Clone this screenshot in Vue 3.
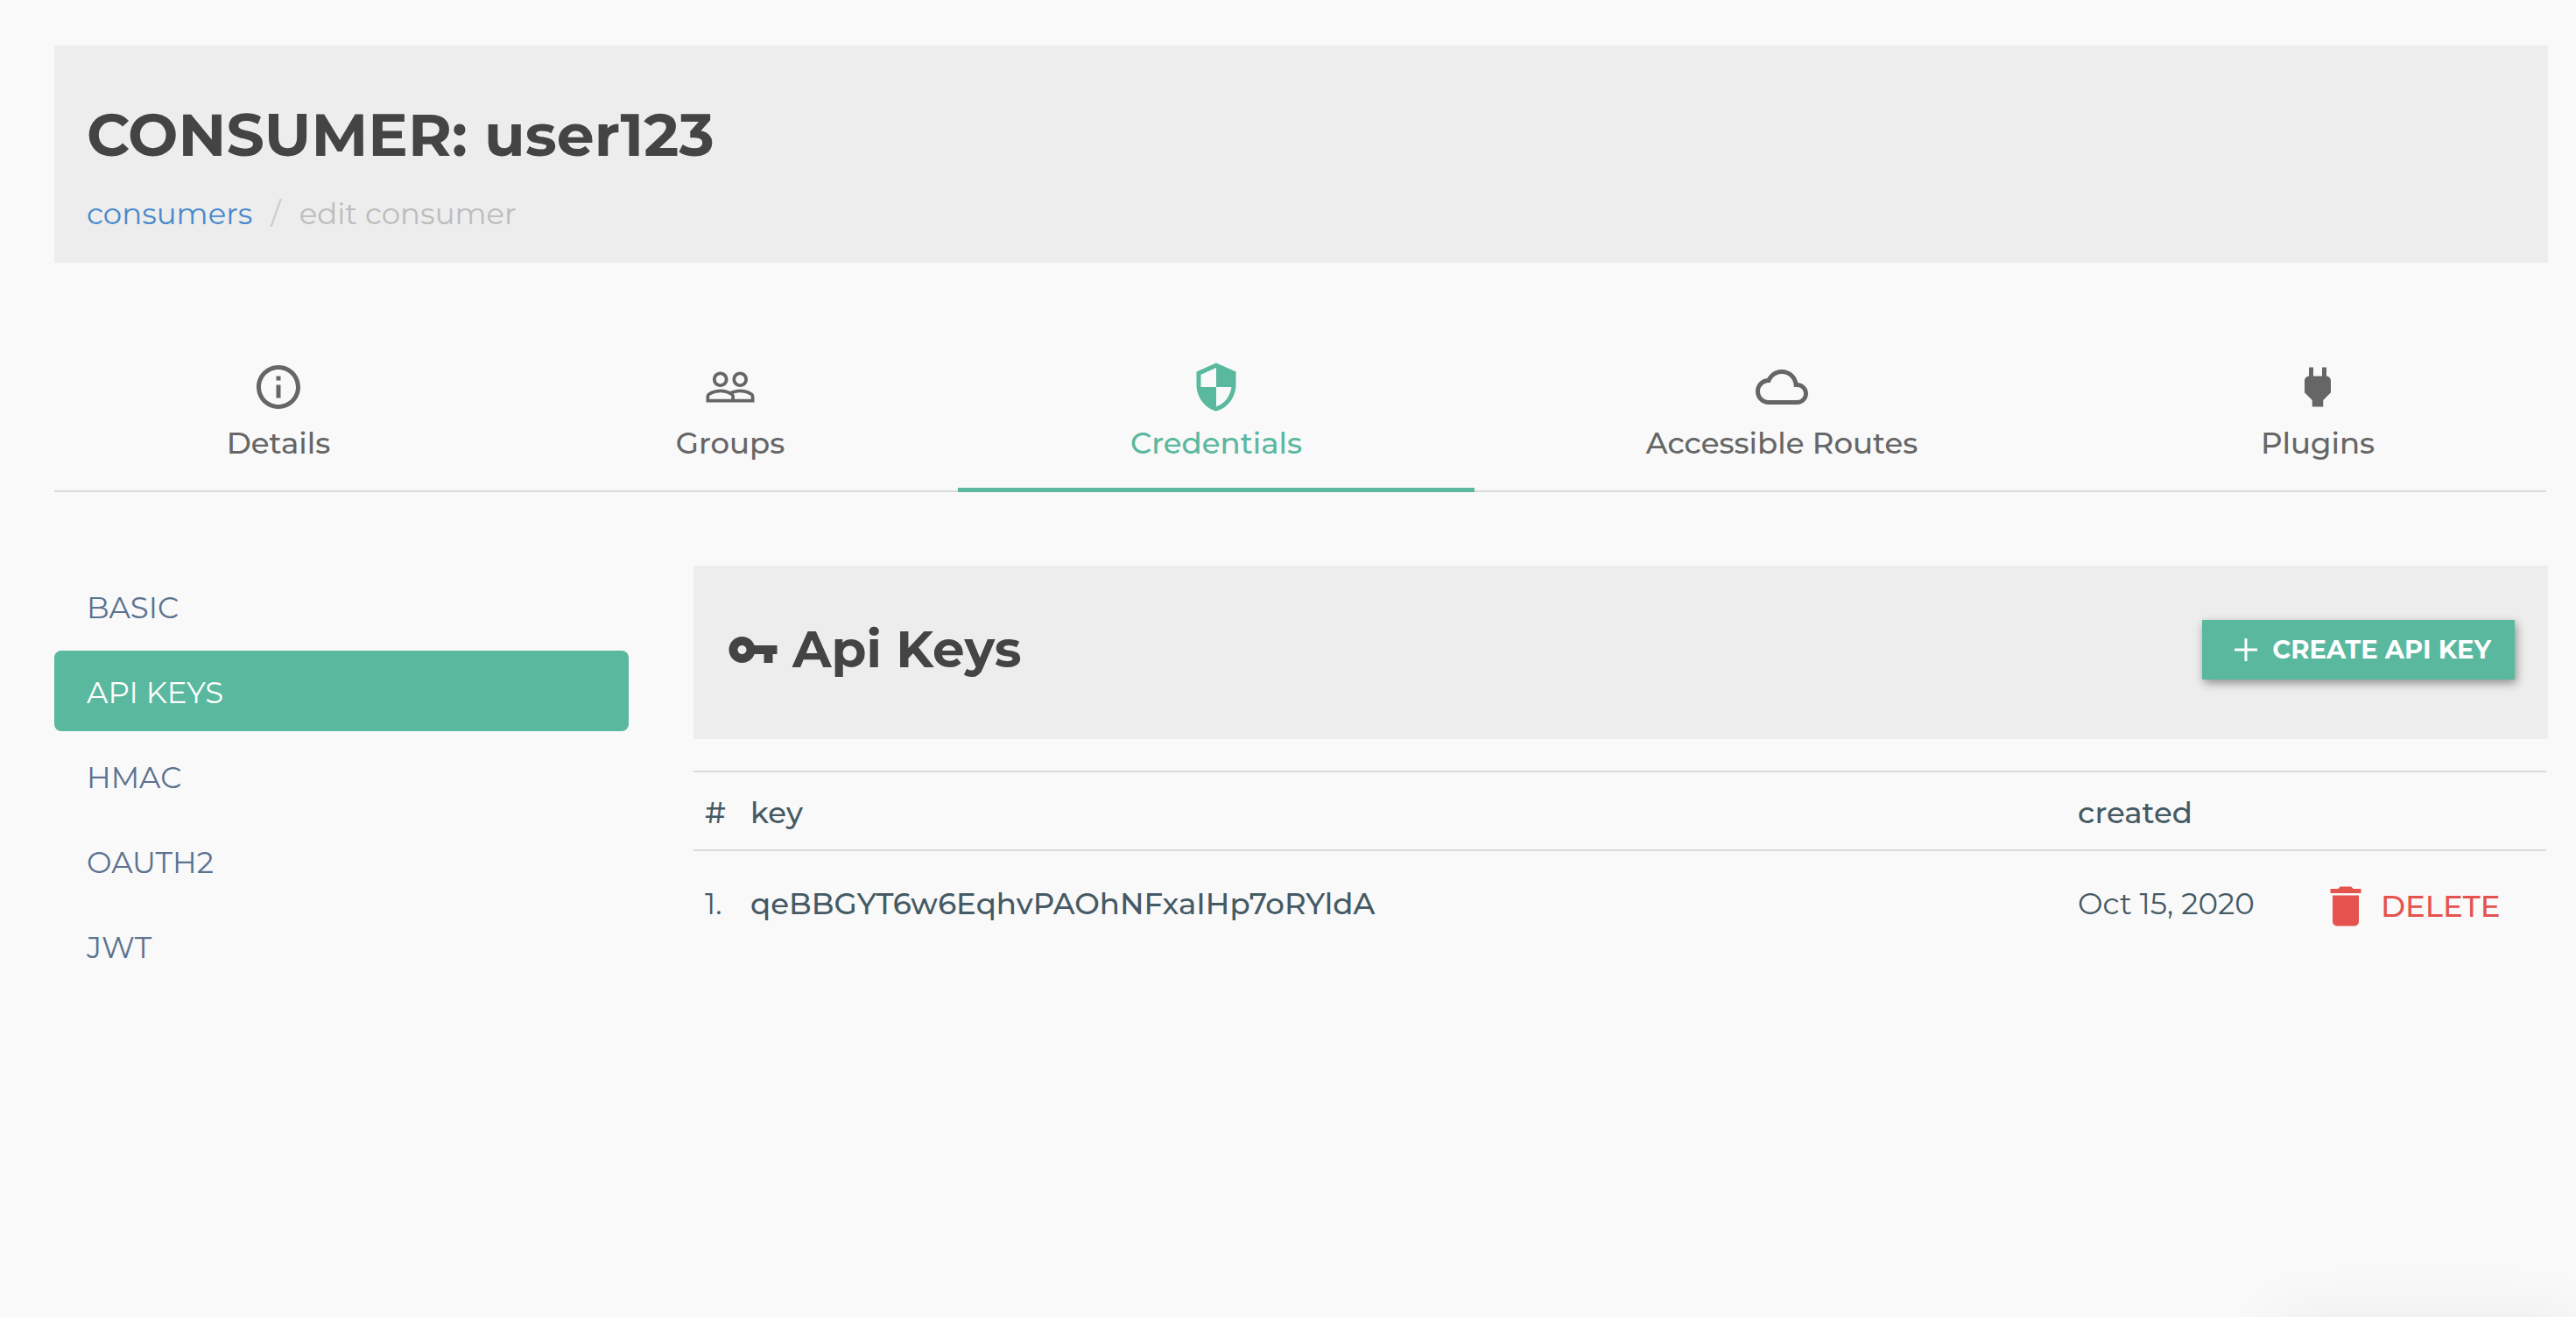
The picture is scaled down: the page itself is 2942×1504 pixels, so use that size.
<script setup>
import { ref } from 'vue'

const tabs = [
  {
    label: 'Details',
    icon: 'M11 17h2v-6h-2v6zm1-15C6.48 2 2 6.48 2 12s4.48 10 10 10 10-4.48 10-10S17.52 2 12 2zm0 18c-4.41 0-8-3.59-8-8s3.59-8 8-8 8 3.59 8 8-3.59 8-8 8zM11 9h2V7h-2v2z',
  },
  {
    label: 'Groups',
    icon: 'M16.5 13c-1.2 0-3.07.34-4.5 1-1.43-.67-3.3-1-4.5-1C5.33 13 1 14.08 1 16.25V19h22v-2.75c0-2.17-4.33-3.25-6.5-3.25zm-4 4.5h-10v-1.25c0-.54 2.56-1.75 5-1.75s5 1.21 5 1.75v1.25zm9 0H14v-1.25c0-.46-.2-.86-.52-1.22.88-.3 1.96-.53 3.02-.53 2.44 0 5 1.21 5 1.75v1.25zM7.5 12c1.93 0 3.5-1.57 3.5-3.5S9.43 5 7.5 5 4 6.57 4 8.5 5.57 12 7.5 12zm0-5.5c1.1 0 2 .9 2 2s-.9 2-2 2-2-.9-2-2 .9-2 2-2zm9 5.5c1.93 0 3.5-1.57 3.5-3.5S18.43 5 16.5 5 13 6.57 13 8.5s1.57 3.5 3.5 3.5zm0-5.5c1.1 0 2 .9 2 2s-.9 2-2 2-2-.9-2-2 .9-2 2-2z',
  },
  {
    label: 'Credentials',
    icon: 'M12 1L3 5v6c0 5.55 3.84 10.74 9 12 5.16-1.26 9-6.45 9-12V5l-9-4zm0 10.99h7c-.53 4.12-3.28 7.79-7 8.94V12H5V6.3l7-3.11v8.8z',
  },
  {
    label: 'Accessible Routes',
    icon: 'M19.35 10.04C18.67 6.59 15.64 4 12 4 9.11 4 6.6 5.64 5.35 8.04 2.34 8.36 0 10.91 0 14c0 3.31 2.69 6 6 6h13c2.76 0 5-2.24 5-5 0-2.64-2.05-4.78-4.65-4.96zM19 18H6c-2.21 0-4-1.79-4-4s1.79-4 4-4h.71C7.37 7.69 9.48 6 12 6c3.04 0 5.5 2.46 5.5 5.5v.5H19c1.66 0 3 1.34 3 3s-1.34 3-3 3z',
  },
  {
    label: 'Plugins',
    icon: 'M16 7V3h-2v4h-4V3H8v4C7 7 6 8 6 9v5.5L9.5 18v3h5v-3l3.500-3.500V9c0-1-1-2-2-2z',
  },
]

const sections = ['BASIC', 'API KEYS', 'HMAC', 'OAUTH2', 'JWT']
const keys = [{ key: 'qeBBGYT6w6EqhvPAOhNFxaIHp7oRYldA', created: 'Oct 15, 2020' }]

const activeTab = ref('Credentials')
const activeSection = ref('API KEYS')
</script>

<template>
  <main class="page">
    <header class="page-header">
      <h1>CONSUMER: user123</h1>
      <nav class="breadcrumb" aria-label="Breadcrumb">
        <a href="#consumers">consumers</a>
        <span class="separator">/</span>
        <span class="current">edit consumer</span>
      </nav>
    </header>

    <nav class="tabs" aria-label="Consumer">
      <button
        v-for="tab in tabs"
        :key="tab.label"
        type="button"
        class="tab"
        :class="{ active: tab.label === activeTab }"
        @click="activeTab = tab.label"
      >
        <svg class="icon" viewBox="0 0 24 24" aria-hidden="true"><path :d="tab.icon" /></svg>
        <span>{{ tab.label }}</span>
      </button>
    </nav>

    <div class="content">
      <nav class="sections" aria-label="Credential types">
        <a
          v-for="section in sections"
          :key="section"
          href="#credentials"
          class="section"
          :class="{ active: section === activeSection }"
          @click.prevent="activeSection = section"
        >{{ section }}</a>
      </nav>

      <section class="panel">
        <div class="panel-header">
          <h2>
            <svg class="icon" viewBox="0 0 24 24" aria-hidden="true">
              <path d="M12.650 10C11.830 7.670 9.610 6 7 6c-3.310 0-6 2.690-6 6s2.690 6 6 6c2.610 0 4.830-1.670 5.650-4H17v4h4v-4h2v-4H12.650zM7 14c-1.100 0-2-.9-2-2s.9-2 2-2 2 .9 2 2-.9 2-2 2z" />
            </svg>
            Api Keys
          </h2>
          <button type="button" class="create">
            <svg viewBox="0 0 28 28" aria-hidden="true"><path d="M14 1v26M1 14h26" /></svg>
            CREATE API KEY
          </button>
        </div>

        <table>
          <colgroup>
            <col class="col-index" />
            <col />
            <col class="col-side" />
            <col class="col-side" />
          </colgroup>
          <thead>
            <tr>
              <th scope="col">#</th>
              <th scope="col">key</th>
              <th scope="col">created</th>
              <th></th>
            </tr>
          </thead>
          <tbody>
            <tr v-for="(row, index) in keys" :key="row.key">
              <td>{{ index + 1 }}.</td>
              <td class="key">{{ row.key }}</td>
              <td>{{ row.created }}</td>
              <td class="actions">
                <button type="button" class="delete">
                  <svg class="icon" viewBox="0 0 24 24" aria-hidden="true">
                    <path d="M19 4h-3.500l-1-1h-5l-1 1H5v2h14zM6 19a2 2 0 0 0 2 2h8a2 2 0 0 0 2-2V7H6z" />
                  </svg>
                  DELETE
                </button>
              </td>
            </tr>
          </tbody>
        </table>
      </section>
    </div>

    <div class="toast" role="status"></div>
  </main>
</template>

<style>
body {
  background: #f9f9f9;
}
</style>

<style scoped>
.page {
  padding: 52px 32px 52px 62px;
  font-family: Montserrat, Inter, sans-serif;
  font-size: 34px;
  line-height: 50px;
  color: #455a64;
}

button {
  margin: 0;
  padding: 0;
  border: 0;
  background: none;
  font: inherit;
  color: inherit;
  cursor: pointer;
}

a {
  text-decoration: none;
}

.icon {
  flex: none;
  width: 60px;
  height: 60px;
  fill: currentColor;
}

.page-header {
  padding: 62px 37px 31px;
  background: #ededed;
}

h1 {
  margin: 0 0 25px;
  font-size: 68px;
  font-weight: 700;
  line-height: 80px;
  color: #444;
}

.breadcrumb {
  display: flex;
  gap: 21px;
}

.breadcrumb a {
  color: #4a8acb;
}

.separator {
  color: #ccc;
}

.current {
  color: #bcbcbc;
}

.tabs {
  display: grid;
  grid-template-columns: 512fr 520fr 590fr 702fr 522fr;
  margin: 60px 2px 84px 0;
  box-shadow: inset 0 -2px #dadada;
}

.tab {
  display: flex;
  flex-direction: column;
  align-items: center;
  gap: 9px;
  padding: 52px 0 26px;
  border-bottom: 5px solid transparent;
  font-weight: 500;
  color: #666;
}

.tab.active {
  border-color: #59b89e;
  color: #59b89e;
}

.content {
  display: grid;
  grid-template-columns: 656fr 2118fr;
  gap: 74px;
  align-items: start;
}

.sections {
  display: flex;
  flex-direction: column;
  gap: 5px;
}

.section {
  padding: 23px 37px 19px;
  border-radius: 8px;
  color: #5b7290;
}

.section.active {
  background: #59b89e;
  color: #fff;
}

.panel-header {
  display: flex;
  align-items: center;
  justify-content: space-between;
  padding: 61px 38px 67px;
  background: #ededed;
}

h2 {
  display: flex;
  align-items: center;
  gap: 15px;
  margin: 0;
  font-size: 58px;
  font-weight: 700;
  line-height: 70px;
  color: #444;
}

.create {
  display: flex;
  align-items: center;
  gap: 16px;
  padding: 9px 27px 9px 36px;
  background: #59b89e;
  box-shadow: 2px 4px 10px rgba(0, 0, 0, 0.4);
  font-size: 29px;
  font-weight: 700;
  color: #fff;
}

.create svg {
  width: 28px;
  height: 28px;
  fill: none;
  stroke: currentColor;
  stroke-width: 3;
}

table {
  width: calc(100% - 2px);
  margin-top: 36px;
  border-collapse: collapse;
  border-top: 2px solid #dadada;
  table-layout: fixed;
}

.col-index {
  width: 52px;
}

.col-side {
  width: 274px;
}

th,
td {
  padding: 21px 0 17px 13px;
  text-align: left;
  white-space: nowrap;
  font-weight: 500;
}

th {
  border-bottom: 2px solid #dadada;
}

td {
  padding: 30px 0 36px 13px;
  font-weight: 400;
}

td.key {
  font-weight: 500;
}

td.actions {
  padding: 33px 0 33px 15px;
}

.delete {
  display: flex;
  align-items: center;
  gap: 10px;
  font-weight: 500;
  color: #e5534f;
}

/* Empty notification tray: only its shadow reaches into the window. */
.toast {
  position: fixed;
  right: 0;
  bottom: -130px;
  width: 340px;
  height: 120px;
  background: #fff;
  box-shadow: 0 0 80px rgba(0, 0, 0, 0.08);
}
</style>
